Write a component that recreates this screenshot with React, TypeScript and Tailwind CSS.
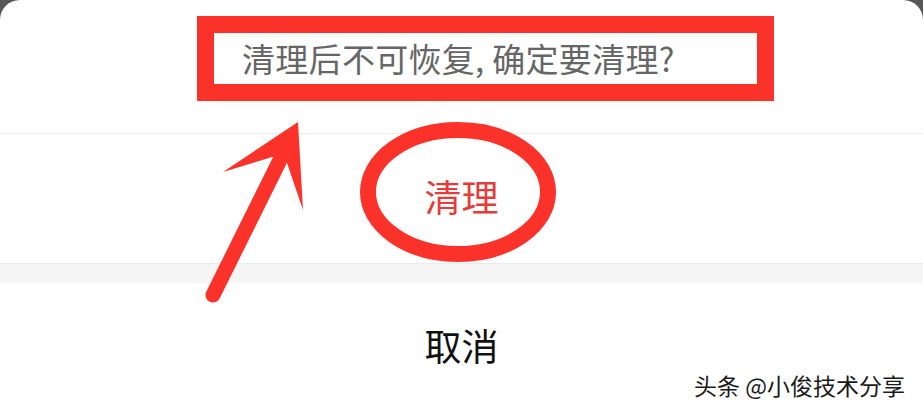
import React from "react";

const cjk = { fontFamily: '"Noto Sans CJK SC", "Noto Sans", sans-serif' };

export default function App() {
  return (
    <div className="relative w-[923px] h-[411px] overflow-hidden bg-[#575757]" style={cjk}>
      <div className="flex h-full flex-col rounded-t-[20px] bg-white">
        <div className="h-[133px] shrink-0 pt-[16px] pl-[197px]">
          <div className="flex h-[85px] w-[577px] items-center border-[17px] border-[#fa3229] bg-white pl-[28px]">
            <span className="text-[33px] leading-none tracking-[0.3px] text-[#666666] whitespace-nowrap">清理后不可恢复,&nbsp;确定要清理?</span>
          </div>
        </div>
        <div className="flex h-[130px] shrink-0 items-center justify-center border-t border-[#ebebeb] pb-[4px]">
          <span className="text-[37px] leading-none text-[#e63b3b]">清理</span>
        </div>
        <div className="h-[20px] shrink-0 border-t border-[#ebebeb] bg-[#f5f5f5]" />
        <div className="flex flex-1 items-center justify-center pb-[4px]">
          <span className="text-[37px] leading-none text-[#111111]">取消</span>
        </div>
      </div>

      <svg className="absolute left-0 top-0" width="923" height="411" viewBox="0 0 923 411">
        <ellipse cx="458" cy="192" rx="90" ry="62" fill="none" stroke="#fa3229" strokeWidth="16" />
        <line x1="279" y1="162" x2="213" y2="295" stroke="#fa3229" strokeWidth="15" strokeLinecap="round" />
        <polygon points="298,122 223,172 272,157 287,163 303,210" fill="#fa3229" />
      </svg>

      <div
        className="absolute left-[694px] top-[374px] text-[23px] leading-none text-[#1a1a1a] whitespace-nowrap"
        style={{ textShadow: "0 0 2px #fff, 0 0 2px #fff" }}
      >
        头条 @小俊技术分享
      </div>
    </div>
  );
}
